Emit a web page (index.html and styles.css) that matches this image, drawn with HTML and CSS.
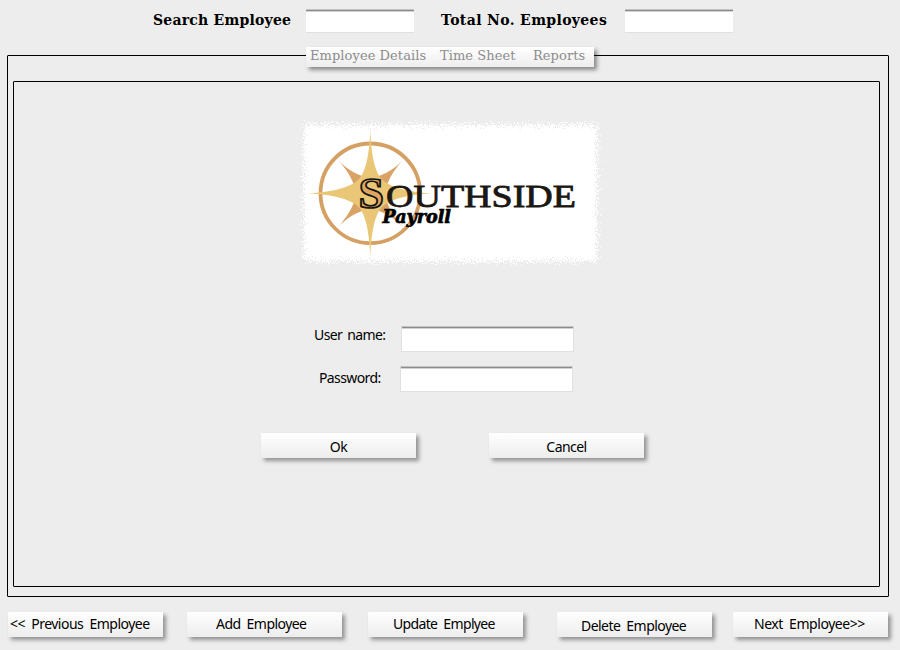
FILE: index.html
```html
<!DOCTYPE html>
<html lang="en">
<head>
<meta charset="utf-8">
<title>Southside Payroll</title>
<link rel="stylesheet" href="styles.css">
</head>
<body>
<header class="summary">
  <label class="search-label" for="search">Search Employee</label>
  <input class="field short" id="search" type="text">
  <label class="total-label" for="total">Total No. Employees</label>
  <input class="field short" id="total" type="text">
</header>
<main class="frame">
  <nav class="tabs"><span class="tab details">Employee Details</span><span class="tab time">Time Sheet</span><span class="tab reports">Reports</span></nav>
  <section class="panel">
    <svg class="logo" width="304" height="148" viewBox="299 119 304 148" role="img" aria-label="Southside Payroll">
      <defs>
        <filter id="rough" x="-5%" y="-8%" width="110%" height="116%">
          <feTurbulence type="fractalNoise" baseFrequency="0.85" numOctaves="2" seed="4" result="noise"/>
          <feDisplacementMap in="SourceGraphic" in2="noise" scale="20" xChannelSelector="R" yChannelSelector="G"/>
        </filter>
      </defs>
      <rect x="304" y="125" width="293" height="136" fill="#fff" filter="url(#rough)"/>
      <rect x="308" y="130" width="285" height="126" fill="#fff"/>
      <path d="M338 160C347 169 354 173 362 176L370 186L379 176C387 173 394 169 403 160C394 170 390 177 387 185L378 193.300L387 202C390 210 394 217 403 227C394 218 387 214 379 211L370 200L362 211C354 214 347 218 338 227C347 217 351 210 354 202L363 193.300L354 185C351 177 347 170 338 160Z" fill="#d9a366"/>
      <circle cx="370.300" cy="193.300" r="49.800" fill="none" stroke="#d5a063" stroke-width="3.800"/>
      <path d="M370.300 130C371.500 160 376 174 383 180.500C391 187 406 192 432 193.300C406 194.600 391 199.600 383 206C376 212.600 371.500 227 370.300 257C369 227 364.600 212.600 357.600 206C349.600 199.600 335 194.600 307 193.300C335 192 349.600 187 357.600 180.500C364.600 174 369 160 370.300 130Z" fill="#eac777"/>
      <text class="initial" x="358.500" y="207.500" textLength="25.500" lengthAdjust="spacingAndGlyphs">S</text>
      <text class="wordmark" x="386" y="207" textLength="190" lengthAdjust="spacingAndGlyphs">OUTHSIDE</text>
      <text class="payroll" x="382.500" y="223" textLength="68.500" lengthAdjust="spacingAndGlyphs">Payroll</text>
    </svg>
    <form class="login">
      <div class="row user"><label for="user">User name:</label><input class="field" id="user" type="text"></div>
      <div class="row pass"><label for="pass">Password:</label><input class="field" id="pass" type="password"></div>
      <div class="actions"><button class="btn ok" type="button">Ok</button><button class="btn cancel" type="button">Cancel</button></div>
    </form>
  </section>
</main>
<footer class="toolbar">
  <button class="btn prev" type="button">&lt;&lt; Previous Employee</button>
  <button class="btn add" type="button">Add Employee</button>
  <button class="btn update" type="button">Update Emplyee</button>
  <button class="btn delete" type="button">Delete Employee</button>
  <button class="btn next" type="button">Next Employee&gt;&gt;</button>
</footer>
</body>
</html>
```
FILE: styles.css
```css
* { box-sizing: border-box; }
body {
  margin: 0;
  width: 900px;
  height: 650px;
  overflow: hidden;
  background: #ededed;
  color: #000;
  font: 14px/20px "Noto Sans", sans-serif;
  letter-spacing: -.6px;
}
.summary {
  display: flex;
  height: 55px;
  padding: 9px 0 0 153px;
  font: bold 14px/23px "DejaVu Serif", serif;
  white-space: nowrap;
}
.search-label { width: 153px; letter-spacing: .22px; }
.total-label { width: 184px; margin-left: 27px; letter-spacing: .36px; }
.field {
  display: block;
  width: 173px;
  height: 26px;
  padding: 2px 4px;
  border: 1px solid #e0e0e0;
  border-top-color: #c4c4c4;
  border-radius: 0;
  outline: 0;
  background: linear-gradient(#8c8c8c 1px, #d2d2d2 1px, #d2d2d2 2px, #fff 2px);
}
.field.short {
  width: 108px;
  height: 24px;
  border-width: 1px 0;
}
.frame {
  position: relative;
  width: 882px;
  height: 542px;
  margin-left: 7px;
  padding: 25px 0 0 5px;
  border: 1px solid #000;
  border-radius: 1px;
}
.tabs {
  position: absolute;
  top: -9px;
  left: 298px;
  display: flex;
  width: 288px;
  height: 20px;
  padding-left: 4px;
  background: linear-gradient(#fff, #ededed);
  box-shadow: 3px 3px 4px rgba(0, 0, 0, .42);
  color: #8c8c8c;
  font: 13px/18px "DejaVu Serif", serif;
  letter-spacing: .07px;
  white-space: nowrap;
}
.details { width: 130px; }
.time { width: 93px; }
.panel {
  display: flex;
  flex-direction: column;
  width: 867px;
  height: 506px;
  padding-top: 37px;
  border: 1px solid #000;
  border-radius: 1px;
}
.logo { display: block; margin-left: 285px; letter-spacing: 0; }
.initial {
  font: bold 44px "Liberation Serif", serif;
  fill: #dda665;
  stroke: #17130f;
  stroke-width: 1.7px;
}
.wordmark {
  font: 32px "Liberation Serif", serif;
  fill: #1b1713;
  stroke: #1b1713;
  stroke-width: .8px;
}
.payroll { font: italic bold 18px "DejaVu Serif", serif; fill: #000; stroke: #000; stroke-width: .7px; }
.login { padding-top: 59px; }
.row { display: flex; height: 40px; word-spacing: 2px; }
.user { padding-left: 300px; }
.user label { width: 87px; line-height: 17px; }
.pass { padding-left: 305px; }
.pass label { width: 81px; line-height: 23px; }
.actions { display: flex; gap: 73px; padding: 27px 0 0 247px; }
.btn {
  width: 155px;
  height: 25px;
  padding: 1px 0 0;
  border: 0;
  background: linear-gradient(#fff, #ededed);
  box-shadow: 3px 3px 4px rgba(0, 0, 0, .38);
  color: #000;
  font: 14px/25px "Noto Sans", sans-serif;
  letter-spacing: -.55px;
  white-space: nowrap;
}
.toolbar { display: flex; padding: 15px 0 0 8px; }
.toolbar .btn {
  flex: none;
  padding-top: 0;
  padding-bottom: 2px;
  line-height: 23px;
  text-align: left;
  word-spacing: 3px;
}
.toolbar .prev { padding-left: 2px; letter-spacing: -.5px; }
.toolbar .add { margin-left: 24px; padding-left: 29px; }
.toolbar .update { margin-left: 26px; padding-left: 25px; letter-spacing: -.65px; }
.toolbar .delete { margin-left: 34px; padding: 2px 0 0 24px; }
.toolbar .next { margin-left: 21px; padding-left: 21px; letter-spacing: -.45px; }
```
